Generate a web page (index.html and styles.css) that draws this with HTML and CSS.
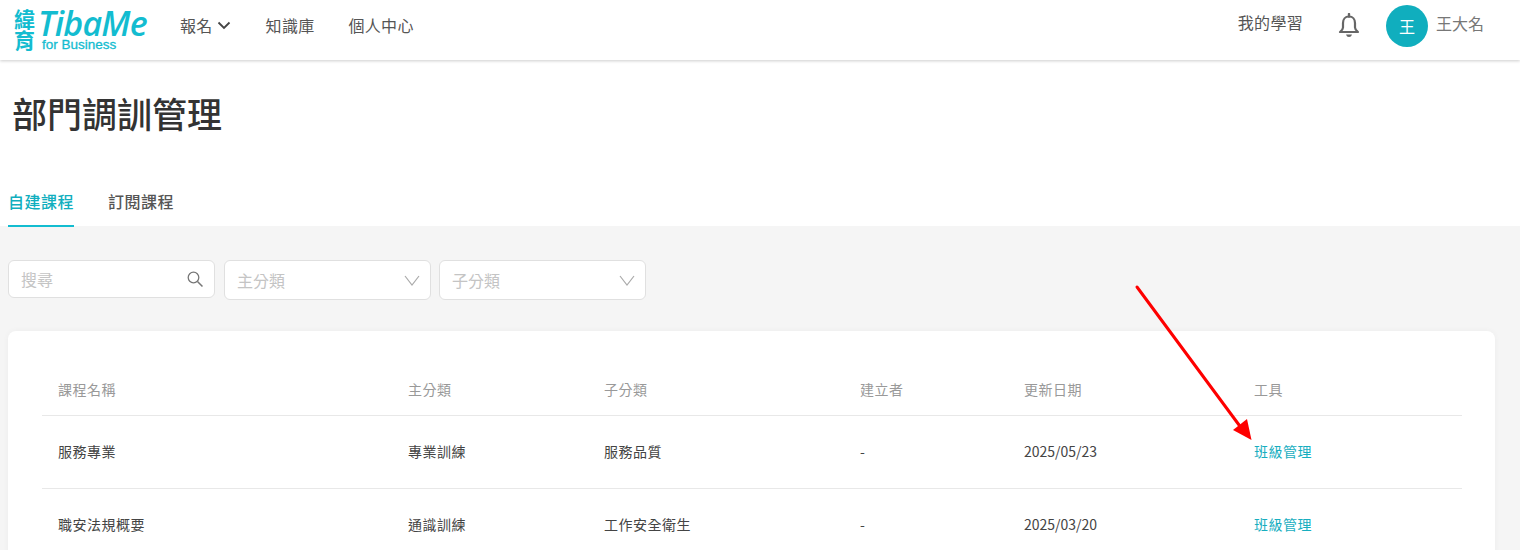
FILE: index.html
```html
<!DOCTYPE html>
<html lang="zh-Hant">
<head>
  <meta charset="UTF-8">
  <title>部門調訓管理</title>
  <link rel="stylesheet" href="styles.css">
</head>
<body>
  <header class="topbar">
    <a class="logo">
      <span class="logo-mark">
        <span class="logo-char">緯</span>
        <span class="logo-char">育</span>
      </span>
      <span class="logo-words">
        <span class="logo-name">TibaMe</span>
        <span class="logo-sub">for Business</span>
      </span>
    </a>
    <nav class="nav">
      <a class="nav-item">報名
        <svg class="nav-caret" width="14" height="9" viewBox="0 0 14 9"><path d="M1.5 1.500 7 7l5.500-5.500" fill="none" stroke="#444" stroke-width="1.800"/></svg>
      </a>
      <a class="nav-item">知識庫</a>
      <a class="nav-item">個人中心</a>
    </nav>
    <div class="user-area">
      <a class="nav-item nav-item-up">我的學習</a>
      <svg class="bell" width="24" height="26" viewBox="0 0 24 26">
        <path d="M12 3.500c-3.800 0-6 2.800-6 6.500v4.500c0 1.800-1.400 3.200-3 4.500h18c-1.600-1.300-3-2.700-3-4.500V10c0-3.700-2.200-6.500-6-6.500z" fill="none" stroke="#666" stroke-width="2.200" stroke-linejoin="round"/>
        <path d="M12 1v2.500" stroke="#666" stroke-width="2.400" stroke-linecap="round"/>
        <path d="M9 21.500c.5 1.700 1.600 2.500 3 2.500s2.500-.8 3-2.500z" fill="#666"/>
      </svg>
      <span class="avatar">王</span>
      <span class="user-name">王大名</span>
    </div>
  </header>

  <section class="title-block">
    <h1 class="page-title">部門調訓管理</h1>
    <div class="tabs">
      <a class="tab tab-active">自建課程</a>
      <a class="tab">訂閱課程</a>
    </div>
  </section>

  <main class="content">
    <div class="filters">
      <div class="field field-search">
        <span>搜尋</span>
        <svg width="18" height="18" viewBox="0 0 18 18"><circle cx="7.500" cy="7.500" r="5.300" fill="none" stroke="#777" stroke-width="1.300"/><path d="m11.500 11.500 5 5" stroke="#777" stroke-width="1.500"/></svg>
      </div>
      <div class="field">
        <span>主分類</span>
        <svg width="16" height="11" viewBox="0 0 16 11"><path d="M1 1l7 9 7-9" fill="none" stroke="#aaa" stroke-width="1.200"/></svg>
      </div>
      <div class="field">
        <span>子分類</span>
        <svg width="16" height="11" viewBox="0 0 16 11"><path d="M1 1l7 9 7-9" fill="none" stroke="#aaa" stroke-width="1.200"/></svg>
      </div>
    </div>

    <div class="card">
      <table class="course-table">
        <thead>
          <tr>
            <th class="col-name">課程名稱</th>
            <th class="col-main">主分類</th>
            <th class="col-sub">子分類</th>
            <th class="col-owner">建立者</th>
            <th class="col-date">更新日期</th>
            <th>工具</th>
          </tr>
        </thead>
        <tbody>
          <tr>
            <td>服務專業</td>
            <td>專業訓練</td>
            <td>服務品質</td>
            <td>-</td>
            <td class="cell-date">2025/05/23</td>
            <td><a class="tool-link">班級管理</a></td>
          </tr>
          <tr>
            <td>職安法規概要</td>
            <td>通識訓練</td>
            <td>工作安全衛生</td>
            <td>-</td>
            <td class="cell-date">2025/03/20</td>
            <td><a class="tool-link">班級管理</a></td>
          </tr>
        </tbody>
      </table>
    </div>
  </main>

  <svg class="red-arrow" width="130" height="170" viewBox="0 0 130 170">
    <path d="M4 4 109 146" stroke="#fe0000" stroke-width="3" stroke-linecap="round"/>
    <path d="M118.500 157 100 147 114 136z" fill="#fe0000"/>
  </svg>
</body>
</html>
```

FILE: styles.css
```css
* {
  box-sizing: border-box;
}
html, body {
  height: 100%;
}
body {
  margin: 0;
  overflow: hidden;
  font-family: "Noto Sans CJK TC", "Noto Sans", sans-serif;
  color: #444;
  background-color: #f5f5f5;
}

/* top bar */
.topbar {
  height: 60px;
  display: flex;
  align-items: center;
  padding: 0 36px 8px 14px;
  background-color: #fff;
  box-shadow: 0 1px 3px rgba(0, 0, 0, 0.2);
  position: relative;
}
.logo {
  width: 166px;
  display: flex;
  align-items: flex-start;
  gap: 3px;
  margin-top: 7px;
  color: #13bcd0;
}
.logo-char {
  display: block;
  height: 21px;
  font-size: 21px;
  font-weight: 700;
  line-height: 21px;
}
.logo-words {
  display: flex;
  flex-direction: column;
}
.logo-name {
  display: block;
  height: 30px;
  font-family: "Open Sans", sans-serif;
  font-size: 34px;
  font-style: italic;
  font-weight: 600;
  line-height: 30px;
  letter-spacing: -0.8px;
}
.logo-sub {
  display: block;
  height: 14px;
  font-family: "Liberation Sans", sans-serif;
  font-size: 13.500px;
  -webkit-text-stroke: 0.3px #13bcd0;
  line-height: 14px;
  margin-left: 4px;
}
.nav {
  display: flex;
  align-items: center;
  gap: 34px;
  margin-top: -2px;
}
.nav-item {
  font-size: 16px;
  letter-spacing: 0.3px;
  color: #555;
  display: flex;
  align-items: center;
  gap: 4px;
}
.nav-caret {
  margin-right: 1px;
}
.nav-item-up {
  margin-top: -8px;
}
.user-area {
  margin-left: auto;
  display: flex;
  align-items: center;
}
.bell {
  margin-left: 34px;
}
.avatar {
  width: 42px;
  height: 42px;
  margin-left: 25px;
  border-radius: 50%;
  background-color: #10aebe;
  color: #fff;
  font-size: 16px;
  display: flex;
  align-items: center;
  justify-content: center;
}
.user-name {
  margin-left: 8px;
  margin-top: -6px;
  font-size: 16px;
  color: #777;
}

/* title and tabs */
.title-block {
  background-color: #fff;
  height: 166px;
  padding: 0 8px;
}
.page-title {
  margin: 0;
  padding: 27px 0 0 4px;
  height: 125px;
  font-size: 35px;
  line-height: 52px;
  font-weight: 500;
  color: #333;
}
.tabs {
  display: flex;
  gap: 34px;
}
.tab {
  height: 42px;
  font-size: 16px;
  line-height: 32px;
  font-weight: 500;
  letter-spacing: 0.5px;
  color: #555;
}
.tab-active {
  color: #10aebe;
  border-bottom: 2px solid #13bcd0;
}

/* filters */
.content {
  height: 324px;
  overflow: hidden;
  padding: 34px 25px 0 8px;
}
.filters {
  display: flex;
  gap: 8px;
}
.field {
  width: 207px;
  height: 40px;
  padding: 0 10px 0 12px;
  display: flex;
  align-items: center;
  justify-content: space-between;
  background-color: #fff;
  border: 1px solid #e0e0e0;
  border-radius: 6px;
  font-size: 16px;
  color: #c4c4c4;
}
.field-search {
  height: 38px;
  margin-right: 1px;
}

/* table card */
.card {
  margin-top: 31px;
  padding: 31px 33px 0 34px;
  height: 300px;
  background-color: #fff;
  border-radius: 8px;
  box-shadow: 0 0 6px rgba(0, 0, 0, 0.04);
}
.course-table {
  width: 100%;
  border-collapse: collapse;
  table-layout: fixed;
  font-size: 14px;
  letter-spacing: 0.5px;
}
.course-table th {
  height: 53px;
  padding: 2px 16px 0;
  text-align: left;
  font-weight: 400;
  color: #999;
  border-bottom: 1px solid #e8e8e8;
}
.course-table td {
  height: 73px;
  padding: 0 16px 2px;
  color: #444;
  border-bottom: 1px solid #e8e8e8;
}
.course-table .cell-date {
  letter-spacing: 0;
}
.col-name { width: 350px; }
.col-main { width: 196px; }
.col-sub { width: 256px; }
.col-owner { width: 164px; }
.col-date { width: 230px; }
.tool-link {
  color: #17aebf;
}

/* annotation over the page */
.red-arrow {
  position: absolute;
  left: 1133px;
  top: 283px;
}
```
